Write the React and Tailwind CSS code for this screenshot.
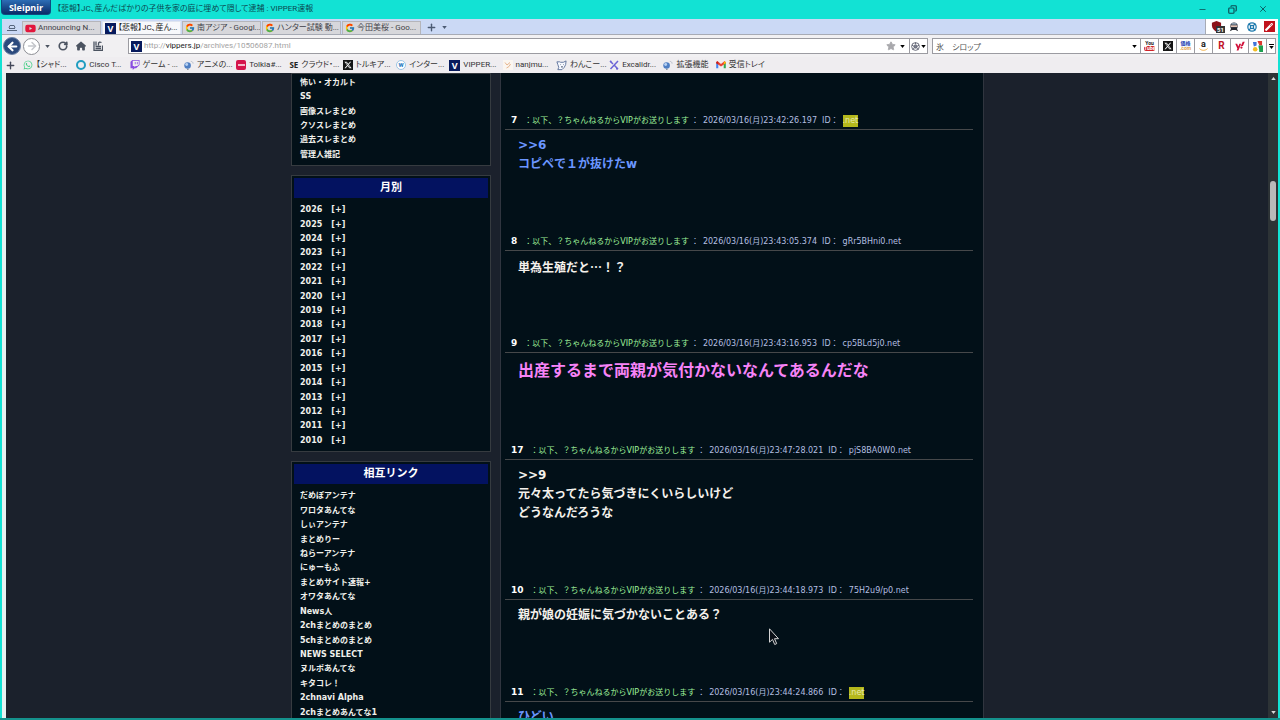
import { Minus, Copy, X, Plus, Star, RotateCw, ArrowLeft, ArrowRight, LifeBuoy } from 'lucide-react'
import { FaYoutube, FaTwitch, FaXTwitter, FaWhatsapp, FaAmazon, FaYahoo, FaHouse, FaWandMagic } from 'react-icons/fa6'
import { FcGoogle } from 'react-icons/fc'
import clsx from 'clsx'

const UI_FONT = "font-['Roboto','Noto_Sans_CJK_JP',sans-serif] [font-feature-settings:'palt']"
const PAGE_FONT = "font-['DejaVu_Sans','Noto_Sans_CJK_JP',sans-serif]"

const POSTER = '以下、？ちゃんねるからVIPがお送りします'

const CATEGORIES = ['怖い・オカルト', 'SS', '画像スレまとめ', 'クソスレまとめ', '過去スレまとめ', '管理人雑記']

const YEARS = [2026, 2025, 2024, 2023, 2022, 2021, 2020, 2019, 2018, 2017, 2016, 2015, 2014, 2013, 2012, 2011, 2010]

const LINKS = [
  'だめぽアンテナ', 'ワロタあんてな', 'しぃアンテナ', 'まとめりー', 'ねらーアンテナ', 'にゅーもふ',
  'まとめサイト速報+', 'オワタあんてな', 'News人', '2chまとめのまとめ', '5chまとめのまとめ', 'NEWS SELECT',
  'ヌルポあんてな', 'キタコレ！', '2chnavi Alpha', '2chまとめあんてな1',
]

const POSTS = [
  { n: 7, date: '2026/03/16(月)23:42:26.197', id: '.net', hit: true, tone: 'blue', lines: ['>>6', 'コピペで１が抜けたw'] },
  { n: 8, date: '2026/03/16(月)23:43:05.374', id: 'gRr5BHni0.net', cjk: true, lines: ['単為生殖だと…！？'] },
  { n: 9, date: '2026/03/16(月)23:43:16.953', id: 'cp5BLd5j0.net', tone: 'pink', lines: ['出産するまで両親が気付かないなんてあるんだな'] },
  { n: 17, date: '2026/03/16(月)23:47:28.021', id: 'pjS8BA0W0.net', lines: ['>>9', '元々太ってたら気づきにくいらしいけど', 'どうなんだろうな'] },
  { n: 10, date: '2026/03/16(月)23:44:18.973', id: '75H2u9/p0.net', lines: ['親が娘の妊娠に気づかないことある？'] },
  { n: 11, date: '2026/03/16(月)23:44:24.866', id: '.net', hit: true, tone: 'blue', lines: ['ひどい'] },
]

const TONES = {
  blue: 'text-[12px] leading-[19px] text-[#6b96ff]',
  pink: 'text-[16px] leading-[24px] text-[#f783f7]',
  plain: 'text-[12px] leading-[19px] text-[#f4f1ec]',
}

function Caret({ className }) {
  return (
    <svg viewBox="0 0 6 4" className={clsx('h-[3px] w-[5px] shrink-0', className)} fill="currentColor">
      <path d="M0 0h6L3 4z" />
    </svg>
  )
}

function VIcon() {
  return (
    <span className="flex size-[11px] shrink-0 items-center justify-center bg-[#071a5c] font-['Open_Sans',sans-serif] text-[9px] leading-none font-bold text-white">V</span>
  )
}

function Balloon() {
  return (
    <svg viewBox="0 0 12 12" className="size-[11px] shrink-0">
      <circle cx="5" cy="6" r="3.6" fill="#4f7fc4" />
      <circle cx="4" cy="5" r="1.6" fill="#b9d2f2" />
      <path d="M8.500 1.500c1.600 0 2.500 1 2.500 2.500" fill="none" stroke="#b7bcc6" />
      <path d="M4.500 9.500h1.500v1.500H4.500z" fill="#7f8894" />
    </svg>
  )
}

function GmailIcon() {
  return (
    <svg viewBox="0 0 12 10" className="h-[8px] w-[10px] shrink-0">
      <path d="M0 1.500V9h2.600V4z" fill="#4285f4" />
      <path d="M12 1.500V9H9.400V4z" fill="#34a853" />
      <path d="M0 1.500 1.500 0 6 3.600 10.500 0 12 1.500 11.500 3 6 7 .5 3z" fill="#ea4335" />
      <path d="M0 1.500 1.200.4 2.600 1.600V4.500L0 2.700z" fill="#c5221f" />
      <path d="M12 1.500 10.800.4 9.400 1.600V4.500L12 2.700z" fill="#fbbc04" />
    </svg>
  )
}

function XIcon() {
  return <span className="flex size-[10px] shrink-0 items-center justify-center bg-[#151515] text-white"><FaXTwitter size={8} /></span>
}

const BOOKMARKS = [
  { label: '【シャド...', icon: <FaWhatsapp size={10} color="#45cf86" /> },
  { label: 'Cisco T...', icon: <span className="size-[10px] shrink-0 rounded-full border-2 border-[#1f9dc0]" /> },
  { label: 'ゲーム - ...', icon: <FaTwitch size={10} color="#8a4be0" /> },
  { label: 'アニメの...', icon: <Balloon /> },
  { label: 'Tolkia#...', icon: <span className="flex size-[10px] shrink-0 items-center justify-center rounded-xs bg-[#d5144b]"><span className="h-[2px] w-[7px] bg-white/70" /></span> },
  { label: 'クラウド・...', icon: <b className="shrink-0 font-['Open_Sans',sans-serif] text-[8px] text-[#222]">SE</b> },
  { label: 'トルキア...', icon: <XIcon /> },
  { label: 'インター...', icon: <span className="flex size-[10px] shrink-0 items-center justify-center rounded-full border border-[#9cc4e4] bg-white text-[7px] leading-none font-bold text-[#1c78bd]">w</span> },
  { label: 'VIPPER...', icon: <VIcon /> },
  {
    label: 'nanjmu...',
    icon: (
      <svg viewBox="0 0 10 10" className="size-[10px] shrink-0" fill="none" stroke="#e7b48d">
        <rect width="10" height="10" fill="#fbf6f0" stroke="none" />
        <path d="M2 2.500 4 5l3-2.500M3.500 8 6 6.500 7.500 4" />
      </svg>
    ),
  },
  {
    label: 'わんこー...',
    icon: (
      <svg viewBox="0 0 12 12" className="size-[11px] shrink-0" fill="#f7f9ff" stroke="#5b7099">
        <path d="M1 2h3l1 .500h3L11 1l-.500 4L9 8 6.500 10.500 2 10.500 3 8 2 5z" />
        <path d="M5 5h.500M8 5h.500M5.500 7.500h2" stroke="#22304f" />
      </svg>
    ),
  },
  {
    label: 'Excalidr...',
    icon: (
      <svg viewBox="0 0 10 10" className="size-[10px] shrink-0" fill="none" stroke="#6b63d6" strokeWidth="1.500">
        <path d="M1 1l3 3M9 1 1.500 9M5.500 5.500 9 9" />
        <path d="M1 1.500h1.500M7 8.800h2" />
      </svg>
    ),
  },
  { label: '拡張機能', icon: <Balloon /> },
  { label: '受信トレイ', icon: <GmailIcon /> },
]

const TABS = [
  { label: 'Announcing N...', icon: <FaYoutube size={11} color="#e2163c" /> },
  { label: '【悲報】JC、産ん...', icon: <VIcon />, active: true },
  { label: '南アジア - Googl...', icon: <FcGoogle size={10} /> },
  { label: 'ハンター試験 動...', icon: <FcGoogle size={10} /> },
  { label: '今田美桜 - Goo...', icon: <FcGoogle size={10} /> },
]

const ENGINES = [
  {
    name: 'YouTube',
    icon: (
      <span className="flex w-[11px] flex-col items-center text-[5px] leading-[5px] font-bold text-[#222]">
        You<span className="w-full rounded-xs bg-[#cf2328] text-center text-white">Tube</span>
      </span>
    ),
  },
  { name: 'X', icon: <XIcon /> },
  {
    name: '価格.com',
    icon: (
      <span className="flex flex-col items-center text-[5px] leading-[5px] font-bold text-[#1d3fb4]">
        価格<span className="text-[#e2a14a]">.com</span>
      </span>
    ),
  },
  {
    name: 'Amazon',
    icon: (
      <span className="flex flex-col items-center text-[9px] leading-[7px] font-bold text-[#1c1c1c]">
        a
        <svg viewBox="0 0 10 3" className="h-[3px] w-[9px]" fill="none" stroke="#f0a52c"><path d="M.5.500c2.500 2.500 6.500 2.500 9 0" /></svg>
      </span>
    ),
  },
  { name: '楽天', icon: <b className="text-[10px] leading-none text-[#bf1328]">R</b> },
  { name: 'Yahoo! JAPAN', icon: <FaYahoo size={10} color="#d1113a" /> },
  {
    name: 'Google',
    icon: (
      <svg viewBox="0 0 12 12" className="size-[11px]">
        <path d="M6 0h5v5H8z" fill="#dc3a2f" />
        <path d="M7 5h5v7H8z" fill="#1c9f51" />
        <path d="M1 1h4v4L2 6z" fill="#3f73d8" />
        <circle cx="3.500" cy="9" r="2.500" fill="#f2bc22" />
        <path d="M7.500 3 5 6l2.500 3" fill="none" stroke="#fff" />
      </svg>
    ),
  },
]

function TitleBar() {
  return (
    <header className="flex h-[19px] shrink-0 items-start justify-between">
      <div className="flex min-w-0 items-start gap-[6px] pl-px">
        <button className="flex h-[15px] w-[50px] items-center justify-center rounded-b-sm border border-t-0 border-[#0e4a80] bg-linear-to-b from-[#2d6db5] to-[#0b2c68] font-['Open_Sans',sans-serif] text-[9px] leading-none font-bold text-white">
          Sleipnir
        </button>
        <h1 className="truncate text-[8px] leading-[18px] text-[#0b4a52]">【悲報】JC、産んだばかりの子供を家の庭に埋めて隠して逮捕 : VIPPER速報</h1>
      </div>
      <div className="flex h-[18px] shrink-0 items-center gap-[21px] pr-[12px] text-[#0b4a52]">
        <button aria-label="最小化"><Minus size={9} strokeWidth={2} /></button>
        <button aria-label="元に戻す"><Copy size={9} strokeWidth={3} className="-scale-x-100" /></button>
        <button aria-label="閉じる"><X size={10} strokeWidth={2} /></button>
      </div>
    </header>
  )
}

function TabStrip() {
  return (
    <div className="flex h-[16px] shrink-0 items-end justify-between border-b border-[#a7abb5] bg-[#cbd9f5]">
      <div className="flex h-[13px] items-center gap-px pl-[5px]">
        <button aria-label="タブ一覧" className="mr-[4px] text-[#56657c]">
          <svg viewBox="0 0 10 8" className="h-[8px] w-[10px]" fill="none" stroke="currentColor">
            <path d="M3 1.500h4M2 4l.8-2.500M8 4l-.8-2.500M0 6.500h10M2 4.500h6" />
          </svg>
        </button>
        {TABS.map(t => (
          <button key={t.label}
            className={clsx('flex h-[13px] w-[79px] items-center gap-[2px] overflow-hidden border border-b-0 pl-[2px] text-[8px] leading-none whitespace-nowrap',
              t.active ? 'border-[#dfe5f0] bg-[#f7f8fb] text-[#222]' : 'border-[#b5b5ba] bg-[#d7d7db] text-[#3f3f48]')}>
            <span className="flex shrink-0">{t.icon}</span>
            <span>{t.label}</span>
          </button>
        ))}
        <button aria-label="新しいタブ" className="ml-[4px] text-[#4c5b73]"><Plus size={11} strokeWidth={3} /></button>
        <button aria-label="タブメニュー" className="ml-[4px] text-[#4c5b73]"><Caret /></button>
      </div>
      <div className="flex h-[15px] w-[73px] items-center justify-between border-l border-[#a7abb5] bg-white pr-[3px] pl-[5px]">
        <button aria-label="広告ブロック" className="relative">
          <svg viewBox="0 0 12 12" className="size-[11px]" fill="#8c1119"><path d="M6 0 11 2v3c0 3-2 5-5 7-3-2-5-4-5-7V2z" /></svg>
          <span className="absolute top-[5px] left-[5px] bg-[#333] px-px text-[6px] leading-[7px] font-bold text-white">51</span>
        </button>
        <button aria-label="拡張機能">
          <svg viewBox="0 0 12 12" className="size-[10px]">
            <circle cx="6" cy="5" r="4.500" fill="#343a46" />
            <path d="M2 4h8v2H2z" fill="#e5c4b4" />
            <path d="M3 1.500h6v1.500H3z" fill="#a9bfd0" />
            <path d="M1 11 3 7h6l2 4-3-1.500H4z" fill="#23262e" />
          </svg>
        </button>
        <button aria-label="ヘルプ" className="text-[#1d79ad]"><LifeBuoy size={10} strokeWidth={3} /></button>
        <button aria-label="ツール" className="flex size-[11px] items-center justify-center bg-[#c1121c] text-white"><FaWandMagic size={8} /></button>
      </div>
    </div>
  )
}

function AddressBar() {
  return (
    <div className="flex h-[22px] shrink-0 items-center bg-[#f1f0f2] pr-[2px] text-[#4b5360]">
      <div className="flex w-[126px] shrink-0 items-center pl-px">
        <button aria-label="戻る" className="flex size-[18px] items-center justify-center rounded-full border border-[#6c82a6] bg-[#2b4a7d] text-white"><ArrowLeft size={13} strokeWidth={4} /></button>
        <button aria-label="進む" className="ml-[2px] flex size-[17px] items-center justify-center rounded-full border border-[#8d8f95] bg-white text-[#c4c6cb]"><ArrowRight size={12} strokeWidth={3} /></button>
        <button aria-label="履歴" className="ml-[5px]"><Caret /></button>
        <button aria-label="更新" className="ml-[8px]"><RotateCw size={10} strokeWidth={4} /></button>
        <button aria-label="ホーム" className="ml-[8px]"><FaHouse size={10} /></button>
        <button aria-label="保存" className="ml-[7px]">
          <svg viewBox="0 0 10 10" className="size-[10px]" fill="none" stroke="currentColor">
            <path d="M1 .500V9.500H9.500V4.500M2.500 7.500h5.500M2.500 5.500h5.500M3 .500v4M5.500 4.500V2.500C5.500 1 7 1 8.500 1.500" strokeWidth="1.300" />
          </svg>
        </button>
      </div>
      <div className="flex h-[16px] min-w-0 flex-1 items-center border border-[#9b9ba1] bg-white pl-[2px]">
        <VIcon />
        <div className="relative ml-[2px] h-full min-w-0 flex-1">
          <input type="text" aria-label="アドレス" defaultValue="http://vippers.jp/archives/10506087.html"
            className="h-full w-full text-[8px] text-transparent caret-black outline-none" />
          <span aria-hidden="true" className="pointer-events-none absolute inset-0 text-[8px] leading-[14px] text-[#a3a3a3]">
            http://<span className="text-[#222]">vippers.jp</span>/archives/10506087.html
          </span>
        </div>
        <button aria-label="お気に入りに追加" className="text-[#a8a8ac]"><Star size={10} fill="currentColor" /></button>
        <button aria-label="アドレス履歴" className="mx-[4px] text-black"><Caret /></button>
        <button aria-label="エンジン切替" className="flex h-full w-[18px] items-center justify-center gap-px border-l border-[#9b9ba1]">
          <svg viewBox="0 0 10 10" className="size-[9px]" fill="none" stroke="#5b5f6e">
            <circle cx="5" cy="5" r="4.300" />
            <circle cx="5" cy="5" r="1.800" fill="#7c8090" />
            <path d="M5 .500v2M9 3.500 7 4.500M8 8.500 6.500 6.500M2 8.500l1.500-2M1 3.500l2 1" />
          </svg>
          <Caret className="text-black" />
        </button>
      </div>
      <div className="ml-[4px] flex h-[16px] w-[344px] shrink-0 items-center border border-[#9b9ba1] bg-white">
        <input type="text" aria-label="検索" defaultValue="氷　シロップ"
          className="h-full min-w-0 flex-1 pl-[3px] text-[8px] leading-[14px] text-[#555] outline-none" />
        <button aria-label="検索履歴" className="mr-[3px] text-black"><Caret /></button>
        {ENGINES.map(e => (
          <button key={e.name} aria-label={e.name} className="flex h-full w-[18px] items-center justify-center border-l border-[#9b9ba1]">{e.icon}</button>
        ))}
        <button aria-label="その他の検索" className="flex h-full w-[9px] flex-col items-center justify-center gap-px border-l border-[#9b9ba1] text-black">
          <span className="h-px w-[5px] bg-black" />
          <Caret />
        </button>
      </div>
    </div>
  )
}

function BookmarkBar() {
  return (
    <nav className="flex h-[16px] shrink-0 items-center bg-[#efedf0] pl-[3px] text-[#333]">
      <button aria-label="追加" className="w-[18px] text-[#44495a]"><Plus size={11} strokeWidth={3} /></button>
      <ul className="grid w-[746px] grid-cols-14">
        {BOOKMARKS.map(b => (
          <li key={b.label}>
            <a href="#" className="flex items-center gap-[3px] text-[8px] leading-[14px] whitespace-nowrap">{b.icon}{b.label}</a>
          </li>
        ))}
      </ul>
    </nav>
  )
}

function SideBox({ title, children }) {
  return (
    <section className="border border-[#363b40] bg-[#021018] p-[2px]">
      {title && <h2 className="bg-[#031260] text-center text-[11px] leading-[20px] font-bold text-white">{title}</h2>}
      {children}
    </section>
  )
}

function Sidebar() {
  return (
    <aside className="flex w-[200px] shrink-0 flex-col gap-[9px] text-[8px] font-bold text-[#f0f0ec]">
      <SideBox>
        <ul className="mb-px grid h-[86px] auto-rows-fr items-center pl-[6px]">
          {CATEGORIES.map(c => <li key={c}><a href="#">{c}</a></li>)}
        </ul>
      </SideBox>
      <SideBox title="月別">
        <ul className="mt-[5px] mb-px grid h-[245px] auto-rows-fr items-center pl-[6px]">
          {YEARS.map(y => (
            <li key={y} className="flex gap-[9px]">
              <a href="#">{y}</a>
              <button>[+]</button>
            </li>
          ))}
        </ul>
      </SideBox>
      <SideBox title="相互リンク">
        <ul className="mt-[5px] mb-px grid h-[231px] auto-rows-fr items-center pl-[6px]">
          {LINKS.map(l => <li key={l}><a href="#">{l}</a></li>)}
        </ul>
      </SideBox>
    </aside>
  )
}

function Post({ post }) {
  return (
    <article>
      <div className="flex h-[19px] items-center border-b border-[#46484a] pt-px pl-[6px] text-[8px] text-[#b3bfe0]">
        <b className="mr-[7px] text-[9px] text-white">{post.n}</b>
        <span className="text-[#9ff09a]">：{POSTER}</span>
        <span className="ml-[2px]">：</span>
        <span className="ml-[4px]">{post.date}</span>
        <span className="ml-[5px]">ID：</span>
        <span className={clsx('ml-[4px]', post.hit && 'bg-[#b5b81c] leading-[12px] text-[#e6e8b0]')}>{post.id}</span>
      </div>
      <div className={clsx('pt-[6px] pl-[13px] font-bold', TONES[post.tone || 'plain'], post.cjk && "font-['Noto_Sans_CJK_JP',sans-serif]")}>
        {post.lines.map(l => <p key={l}>{l}</p>)}
      </div>
    </article>
  )
}

function ScrollBar() {
  return (
    <div className="flex w-[10px] shrink-0 flex-col items-center bg-[#2d3336] py-[4px] text-[#d8d8d8]">
      <Caret className="rotate-180" />
      <div className="mt-[101px] h-[40px] w-[6px] rounded-full bg-[#b9b9b9]" />
      <Caret className="mt-auto" />
    </div>
  )
}

export default function App() {
  return (
    <div className={clsx('relative flex h-screen flex-col overflow-hidden border-b-2 border-[#14918c] bg-[#12e2d4]', UI_FONT)}>
      <TitleBar />
      <div className="mx-[2px] flex min-h-0 flex-1 flex-col">
        <TabStrip />
        <AddressBar />
        <BookmarkBar />
        <div className="flex min-h-0 flex-1 border-l-4 border-[#e6f0f0]">
          <div className={clsx('flex min-w-0 flex-1 justify-center overflow-hidden bg-[#1b212c] pl-px [font-feature-settings:normal]', PAGE_FONT)}>
            <div className="flex w-[693px] gap-[9px]">
              <Sidebar />
              <main className="flex min-w-0 flex-1 flex-col gap-[58px] self-start border-x border-[#30353f] bg-[#021018] pt-[38px] pr-[10px] pb-[60px] pl-[4px]">
                {POSTS.map(p => <Post key={p.n} post={p} />)}
              </main>
            </div>
          </div>
          <ScrollBar />
        </div>
      </div>
      {/* mouse pointer */}
      <svg viewBox="0 0 12 18" className="pointer-events-none absolute top-[628px] left-[769px] h-[18px] w-[12px]" fill="#0a0f16" stroke="#d5d5d5">
        <path d="M.5.8v13.400l3-2.800 2.200 5.100 2-.9-2.200-4.900h4z" />
      </svg>
    </div>
  )
}
